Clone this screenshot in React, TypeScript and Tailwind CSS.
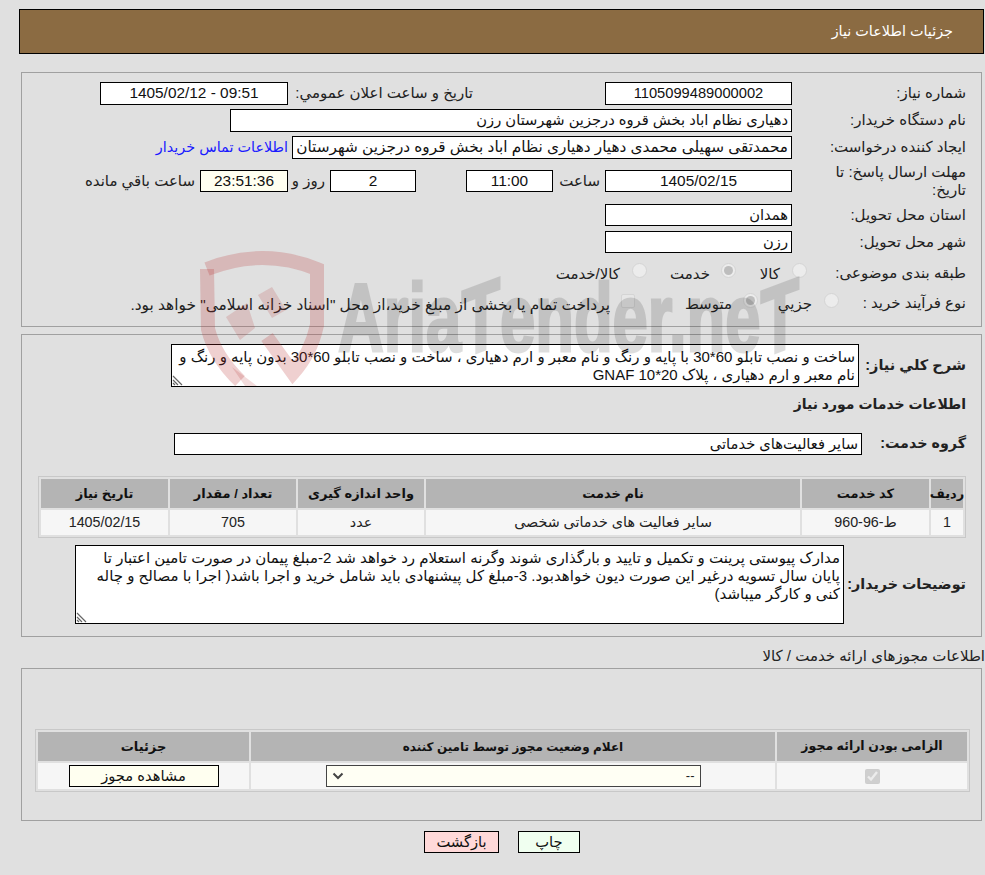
import type { ReactNode } from "react";

const font = "[font-family:'Liberation_Sans','DejaVu_Sans',sans-serif]";

const Field = ({ w, value, align = "text-center", bg = "bg-white", h = "h-[23px]", size = "text-[14.7px]", dir }: { w: string; value: string; align?: string; bg?: string; h?: string; size?: string; dir?: "ltr" | "rtl" }) => (
  <div dir={dir} className={`${w} ${bg} ${align} ${h} ${size} shrink-0 overflow-hidden whitespace-nowrap border border-black px-[3px] leading-[20px] text-[#111]`}>
    {value}
  </div>
);

const Radio = ({ checked = false }: { checked?: boolean }) => (
  <span className="mb-[5px] flex h-[15px] w-[15px] shrink-0 items-center justify-center rounded-full border border-[#d4d4d4] bg-[#ececec]">
    {checked && <span className="h-[9px] w-[9px] rounded-full bg-[#bdbdbd]" />}
  </span>
);

const Label = ({ w = "w-[174px]", children }: { w?: string; children: ReactNode }) => (
  <div className={`${w} shrink-0 whitespace-nowrap text-[15px] text-[#222]`}>{children}</div>
);

const Grip = () => (
  <svg className="absolute bottom-0 left-0" width="11" height="11" viewBox="0 0 11 11" fill="none">
    <path d="M1 1 L10 10 M1 5 L6 10 M1 8 L3 10" stroke="#666" strokeWidth="1.2" />
  </svg>
);

// sits above the form, the reference shows it through inputs and text
const Watermark = () => (
  <div dir="ltr" className="pointer-events-none absolute left-0 top-0 h-[400px] w-[985px]">
    <svg className="absolute left-[195px] top-[245px]" width="140" height="145" viewBox="0 0 140 145" fill="none">
      <path d="M12 24 Q68 2 122 24 L122 80 Q116 108 98 128 L72 92" stroke="#b42a2a" strokeOpacity="0.22" strokeWidth="14" />
      <path d="M12 24 L13 84 Q20 112 45 136" stroke="#b42a2a" strokeOpacity="0.22" strokeWidth="14" />
      <path d="M31 72 L52 58 L60 83 L45 95 Z M63 50 L77 42 L91 65 L77 73 Z M37 122 L62 141 L50 141 Z" fill="#b42a2a" fillOpacity="0.17" />
    </svg>
    <div className="absolute left-[338px] top-[270px] origin-left scale-x-[0.66] whitespace-nowrap text-[96px] font-bold leading-none text-black opacity-[.13] [-webkit-text-stroke:3px_black] [font-family:'Liberation_Sans',sans-serif]">
      Aria<span className="inline-block -skew-y-[14deg]">T</span>ender.ne<span className="inline-block -skew-y-[14deg]">T</span>
    </div>
  </div>
);

const Th = ({ w, children }: { w: string; children: ReactNode }) => (
  <div className={`${w} flex h-[29px] items-center justify-center bg-[#b4b4b4] text-[13px] font-bold text-[#111]`}>{children}</div>
);

const Td = ({ w, children }: { w: string; children: ReactNode }) => (
  <div className={`${w} flex h-[25px] items-center justify-center bg-[#f6f6f6] text-[14.3px] text-[#222]`}>{children}</div>
);

export default function App() {
  return (
    <div dir="rtl" className={`${font} relative h-[875px] w-[985px] overflow-hidden bg-[#e0e0e0] text-[#222]`}>
      <div className="flex flex-col items-start">
        <div className="mr-px mt-[9px] flex h-[45px] w-[965px] items-center border border-black bg-[#8b6b42] pr-[30px] text-[14.4px] text-white">
          جزئیات اطلاعات نیاز
        </div>

        <div className="mr-[3px] mt-[18px] h-[255px] w-[961px] border border-[#a0a0a0] pr-[15px] pt-[9px]">
          <div className="flex h-[23px] items-center">
            <Label>شماره نیاز:</Label>
            <Field w="w-[187px]" value="1105099489000002" />
            <div className="w-[132px]" />
            <div className="w-[185px] text-[15px]">تاریخ و ساعت اعلان عمومي:</div>
            <Field w="w-[188px]" dir="ltr" size="text-[15.4px]" value="1405/02/12 - 09:51" />
          </div>
          <div className="mt-[4px] flex h-[23px] items-center">
            <Label>نام دستگاه خریدار:</Label>
            <Field w="w-[562px]" align="text-right" value="دهیاری نظام اباد بخش قروه درجزین شهرستان رزن" />
          </div>
          <div className="mt-[4px] flex h-[23px] items-center">
            <Label>ایجاد کننده درخواست:</Label>
            <Field w="w-[500px]" align="text-right" size="text-[15.3px]" value="محمدتقی سهیلی محمدی دهیار دهیاری نظام اباد بخش قروه درجزین شهرستان رزن" />
            <a className="mr-[4px] text-[14.4px] text-[#1a1aff]">اطلاعات تماس خریدار</a>
          </div>
          <div className="mt-[11px] flex h-[22px] items-center">
            <Label><div className="w-[135px] whitespace-normal leading-[18px]">مهلت ارسال پاسخ: تا تاریخ:</div></Label>
            <Field w="w-[187px]" h="h-[22px]" size="text-[15.4px]" value="1405/02/15" />
            <div className="w-[52px] pr-[5px] text-[15px]">ساعت</div>
            <Field w="w-[87px]" h="h-[22px]" size="text-[15.4px]" value="11:00" />
            <div className="w-[50px]" />
            <Field w="w-[86px]" h="h-[22px]" size="text-[15.4px]" value="2" />
            <div className="w-[42px] pr-[5px] text-[15px]">روز و</div>
            <Field w="w-[88px]" h="h-[22px]" size="text-[15.4px]" bg="bg-[#fffff0]" value="23:51:36" />
            <div className="pr-[5px] text-[15px]">ساعت باقي مانده</div>
          </div>
          <div className="mt-[12px] flex h-[22px] items-center">
            <Label>استان محل تحویل:</Label>
            <Field w="w-[187px]" h="h-[22px]" align="text-right" value="همدان" />
          </div>
          <div className="mt-[5px] flex h-[22px] items-center">
            <Label>شهر محل تحویل:</Label>
            <Field w="w-[187px]" h="h-[22px]" align="text-right" value="رزن" />
          </div>
          <div className="mt-[8px] flex h-[24px] items-center">
            <Label w="w-[159px]">طبقه بندی موضوعی:</Label>
            <Radio /><span className="mr-[12px] w-[44px] pt-[3px] text-[15px]">كالا</span>
            <Radio checked /><span className="mr-[11px] w-[63px] pt-[3px] text-[15px]">خدمت</span>
            <Radio /><span className="mr-[12px] pt-[3px] text-[15px]">كالا/خدمت</span>
          </div>
          <div className="mt-[6px] flex h-[24px] items-center">
            <Label w="w-[127px]">نوع فرآیند خرید :</Label>
            <Radio /><span className="mr-[12px] w-[54px] pt-[3px] text-[15px]">جزیي</span>
            <Radio checked /><span className="mr-[11px] w-[97px] pt-[3px] text-[15px]">متوسط</span>
            <span className="mb-[5px] h-[14px] w-[14px] shrink-0 rounded-[2px] border border-[#d4d4d4] bg-[#e6e6e6]" />
            <span className="mr-[11px] whitespace-nowrap pt-[3px] text-[15.4px]">پرداخت تمام یا بخشی از مبلغ خرید،از محل "اسناد خزانه اسلامی" خواهد بود.</span>
          </div>
        </div>

        <div className="mr-[3px] mt-[7px] h-[303px] w-[961px] border border-[#a0a0a0] pr-[15px] pt-[9px]">
          <div className="flex h-[43px] items-center">
            <div className="w-[107px] shrink-0 whitespace-nowrap text-[14.5px] font-bold">شرح کلي نیاز:</div>
            <div className="relative h-[43px] w-[688px] shrink-0 border border-black bg-white px-[3px] pt-[3px] text-[15px] leading-[18px] text-[#111]">
              ساخت و نصب تابلو 60*30 با پایه و رنگ و نام معبر و ارم دهیاری ، ساخت و نصب تابلو 60*30 بدون پایه و رنگ و نام معبر و ارم دهیاری ، پلاک 20*10 GNAF
              <Grip />
            </div>
          </div>
          <div className="mt-[7px] text-[14px] font-bold">اطلاعات خدمات مورد نیاز</div>
          <div className="mt-[18px] flex h-[22px] items-center">
            <div className="w-[104px] shrink-0 whitespace-nowrap text-[14.3px] font-bold">گروه خدمت:</div>
            <Field w="w-[688px]" h="h-[22px]" align="text-right" value="سایر فعالیت‌های خدماتی" />
          </div>
          <div className="mt-[21px] w-[928px] border border-[#c8c8c8] p-[2px]">
            <div className="flex gap-[2px]">
              <Th w="w-[32px]">ردیف</Th><Th w="w-[127px]">کد خدمت</Th><Th w="w-[374px]">نام خدمت</Th><Th w="w-[126px]">واحد اندازه گیری</Th><Th w="w-[126px]">تعداد / مقدار</Th><Th w="w-[127px]">تاریخ نیاز</Th>
            </div>
            <div className="mt-[2px] flex gap-[2px]">
              <Td w="w-[32px]">1</Td><Td w="w-[127px]">ط-96-960</Td><Td w="w-[374px]">سایر فعالیت های خدماتی شخصی</Td><Td w="w-[126px]">عدد</Td><Td w="w-[126px]">705</Td><Td w="w-[127px]">1405/02/15</Td>
            </div>
          </div>
          <div className="mt-[7px] flex items-center">
            <div className="w-[122px] shrink-0 whitespace-nowrap text-[14.3px] font-bold">توضیحات خریدار:</div>
            <div className="relative h-[79px] w-[769px] shrink-0 border border-black bg-white px-[3px] pt-[3px] text-[15px] leading-[18px] text-[#111]">
              مدارک پیوستی پرینت و تکمیل و تایید و بارگذاری شوند وگرنه استعلام رد خواهد شد 2-مبلغ پیمان در صورت تامین اعتبار تا پایان سال تسویه درغیر این صورت دیون خواهدبود. 3-مبلغ کل پیشنهادی باید شامل خرید و اجرا باشد( اجرا با مصالح و چاله کنی و کارگر میباشد)
              <Grip />
            </div>
          </div>
        </div>

        <div className="mt-[8px] h-[23px] text-[15px]">اطلاعات مجوزهای ارائه خدمت / کالا</div>

        <div className="mr-[3px] h-[153px] w-[961px] border border-[#a0a0a0] pr-[11px] pt-[60px]">
          <div className="w-[935px] border border-[#c8c8c8] p-[2px]">
            <div className="flex gap-[2px]">
              <Th w="w-[190px]"><span className="text-[12.5px]">الزامی بودن ارائه مجوز</span></Th>
              <Th w="w-[524px]"><span className="text-[12px]">اعلام وضعیت مجوز توسط تامین کننده</span></Th>
              <Th w="w-[211px]">جزئیات</Th>
            </div>
            <div className="mt-[2px] flex gap-[2px]">
              <div className="flex h-[26px] w-[190px] items-center justify-center bg-[#f6f6f6]">
                <input type="checkbox" checked disabled readOnly className="h-[15px] w-[15px]" />
              </div>
              <div className="flex h-[26px] w-[524px] items-center justify-center bg-[#f6f6f6]">
                <div className="flex h-[22px] w-[375px] items-center justify-between border border-[#444] bg-[#fffff4] px-[5px] text-[13px]">
                  <span>--</span>
                  <svg width="12" height="8" viewBox="0 0 12 8" fill="none"><path d="M1.5 1.5 L6 6 L10.5 1.5" stroke="#444" strokeWidth="2" /></svg>
                </div>
              </div>
              <div className="flex h-[26px] w-[211px] items-center justify-center bg-[#f6f6f6]">
                <div className="h-[22px] w-[150px] border border-black bg-[#fffff0] text-center text-[14.7px] leading-[20px] text-[#111]">مشاهده مجوز</div>
              </div>
            </div>
          </div>
        </div>

        <div className="mt-[10px] flex w-full justify-center gap-[19px] pl-[19px]">
          <div className="h-[22px] w-[62px] border border-black bg-[#f0fff0] text-center text-[14.7px] leading-[20px] text-[#111]">چاپ</div>
          <div className="h-[22px] w-[75px] border border-black bg-[#ffd9d9] text-center text-[14.7px] leading-[20px] text-[#111]">بازگشت</div>
        </div>
      </div>
      <Watermark />
    </div>
  );
}
